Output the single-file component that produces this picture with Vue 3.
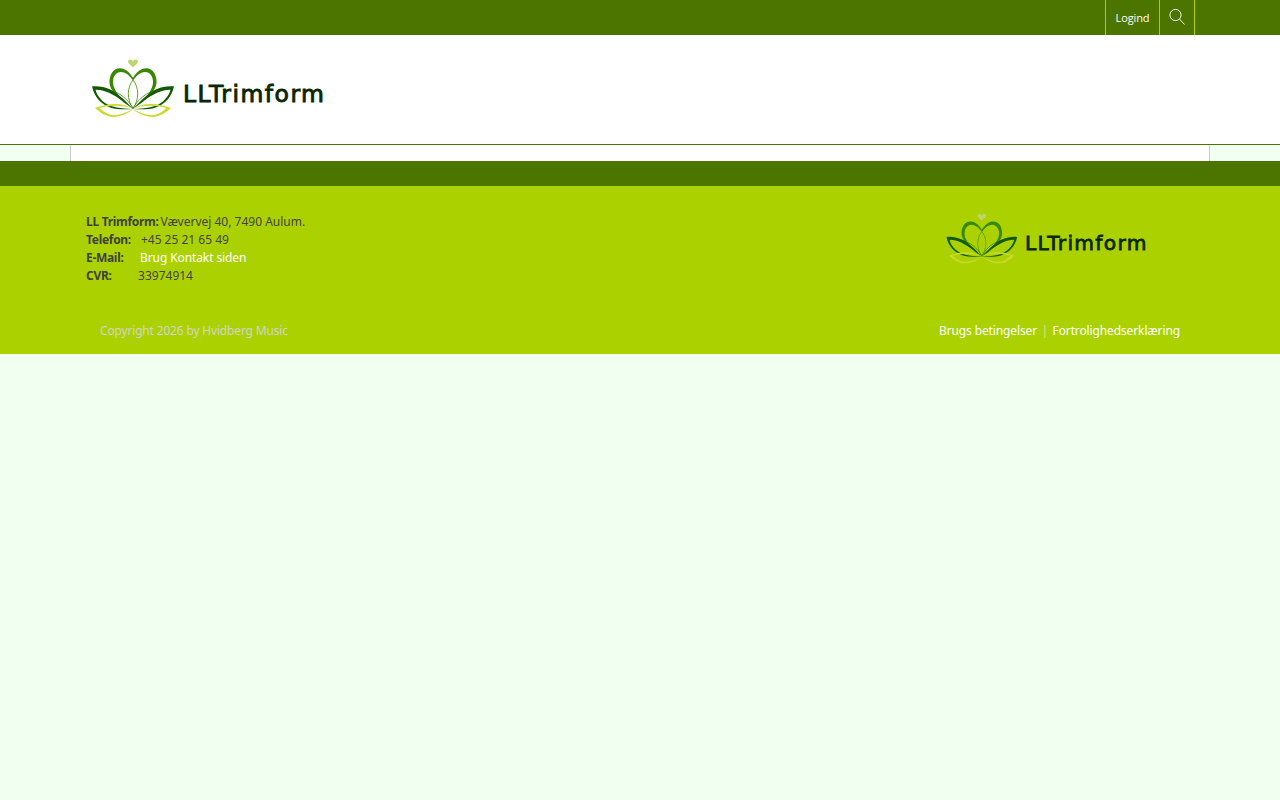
<script setup>
const contact = [
  { label: 'LL Trimform:', value: 'Vævervej 40, 7490 Aulum.', cls: 'gap-a' },
  { label: 'Telefon:', value: '+45 25 21 65 49', cls: 'gap-b' },
  { label: 'E-Mail:', value: 'Brug Kontakt siden', cls: 'gap-c white' },
  { label: 'CVR:', value: '33974914', cls: 'gap-d' }
]
</script>

<template>
  <div class="page">
    <svg width="0" height="0" class="defs">
      <defs>
        <g id="ll-half">
          <path d="M48 22 C44 15.500 39 13 35 13 C27.500 13 24 20 24.500 27 C25 34 34 43 48 51.500 C36 42.500 28.500 34 28 27 C27.500 21 31 16.500 36 16.500 C40 16.500 44 19 48 24.500 Z" fill="#3a8700" />
          <path d="M48 24 C42 31 41.500 42 48 51" fill="none" stroke="#5b9a10" stroke-width="0.9" />
          <path d="M48 51 C43 42 35 36 23 33" fill="none" stroke="#2f7a00" stroke-width="0.7" />
          <path d="M7 30 C14 29.500 19 30.500 24 32.500 C34 37 42 45 48 51.500 C41 46 33 40 24 36 C19 34 14 33 10.500 33.200 C12.500 40 18 46 27 48.800 C33 50.500 41 51 48 51.500 C38 52 30 51.500 26 50.200 C16 47 9 40 7 30 Z" fill="#125a00" />
          <path d="M48 51 C38 45.500 26 45 10 50.500 C15 54.500 21 59.500 31 58.800 C38 58 44 54.500 48 52 C42 54 36 57.300 29 57.300 C23 57.300 18 53.500 14.500 50.500 C26 47.500 38 47.500 48 51 Z" fill="#c9da2b" />
        </g>
        <symbol id="ll-mark" viewBox="0 0 245 65">
          <g transform="translate(0 -0.500) scale(1 1.060)">
            <path d="M48 12 C44 9 42 7 43.500 5.500 C45 4 47 5 48 6.500 C49 5 51 4 52.500 5.500 C54 7 52 9 48 12 Z" fill="#bcd66c" />
            <use href="#ll-half" />
            <use href="#ll-half" transform="translate(96 0) scale(-1 1)" />
          </g>
          <text class="wordmark" x="98" y="47" textLength="141">LLTrimform</text>
        </symbol>
      </defs>
    </svg>

    <div class="topbar">
      <div class="tools">
        <a class="tool login">Logind</a>
        <a class="tool search">
          <svg width="18" height="18" viewBox="0 0 18 18">
            <circle cx="7.500" cy="7" r="5.600" fill="none" stroke="#fff" stroke-width="0.9" />
            <path d="M11.500 11 L16.500 16.500" fill="none" stroke="#fff" stroke-width="0.9" />
          </svg>
        </a>
      </div>
    </div>

    <header class="header">
      <svg class="logo-main"><use href="#ll-mark" /></svg>
    </header>

    <div class="strip"><div class="strip-inner"></div></div>
    <div class="band"></div>

    <footer class="footer">
      <div class="foot-top">
        <div class="contact">
          <div v-for="row in contact" :key="row.label" class="line">
            <b>{{ row.label }}</b><span :class="row.cls">{{ row.value }}</span>
          </div>
        </div>
        <svg class="logo-foot"><use href="#ll-mark" /></svg>
      </div>
      <div class="foot-bottom">
        <span class="copy">Copyright 2026 by Hvidberg Music</span>
        <span class="links">
          <a>Brugs betingelser</a><i>|</i><a>Fortrolighedserklæring</a>
        </span>
      </div>
    </footer>
  </div>
</template>

<style>
html, body { margin: 0; background: #f0fff0; }
</style>

<style scoped>
.page {
  min-height: 800px;
  background: #f0fff0;
  font-family: "Noto Sans", "Open Sans", sans-serif;
  font-size: 12px;
}
.defs { position: absolute; }
.topbar {
  height: 35px;
  background: #4c7500;
  display: flex;
  justify-content: flex-end;
  padding-right: 85px;
}
.tools { display: flex; }
.tool {
  display: flex;
  align-items: center;
  justify-content: center;
  height: 35px;
  border-left: 1px solid #abd200;
  color: #fff;
  box-sizing: border-box;
}
.login {
  width: 54px;
  font-family: "Open Sans", sans-serif;
  font-size: 11px;
  letter-spacing: -0.1px;
}
.search {
  width: 36px;
  border-right: 1px solid #abd200;
  padding-bottom: 2px;
}
.header {
  height: 89px;
  background: #fff;
  border-bottom: 1px solid #4c7500;
  padding: 20px 0 0 85px;
}
.logo-main { display: block; width: 245px; height: 65px; }
.strip { height: 16px; padding: 0 70px; }
.strip-inner {
  height: 16px;
  background: #fff;
  border-left: 1px solid #ccc;
  border-right: 1px solid #ccc;
}
.band { height: 25px; background: #4c7500; }
.footer {
  height: 168px;
  box-sizing: border-box;
  background: #abd200;
  padding: 27px 100px 0 86px;
}
.foot-top {
  display: flex;
  justify-content: space-between;
  height: 109px;
}
.contact { color: #444; line-height: 18px; font-size: 12px; }
.contact b { color: #3f3f3f; letter-spacing: -0.3px; }
.line { white-space: nowrap; }
.gap-a { margin-left: 2px; }
.gap-b { margin-left: 10px; }
.gap-c { margin-left: 16.500px; }
.gap-d { margin-left: 26.500px; }
.white { color: #fff; letter-spacing: -0.1px; }
.logo-foot {
  display: block;
  width: 212px;
  height: 56px;
  margin: -3px 28px 0 0;
}
.foot-bottom {
  display: flex;
  justify-content: space-between;
  padding-left: 14px;
  line-height: 18px;
}
.copy { color: #d4d4c8; letter-spacing: -0.17px; }
.links { color: #fff; letter-spacing: -0.12px; }
.links i { font-style: normal; color: #d9e887; margin: 0 4.500px; }
.wordmark {
  font-family: "DejaVu Sans", sans-serif;
  font-weight: 400;
  font-size: 23.500px;
  fill: #0a2600;
  stroke: #0a2600;
  stroke-width: 0.9px;
}
</style>
